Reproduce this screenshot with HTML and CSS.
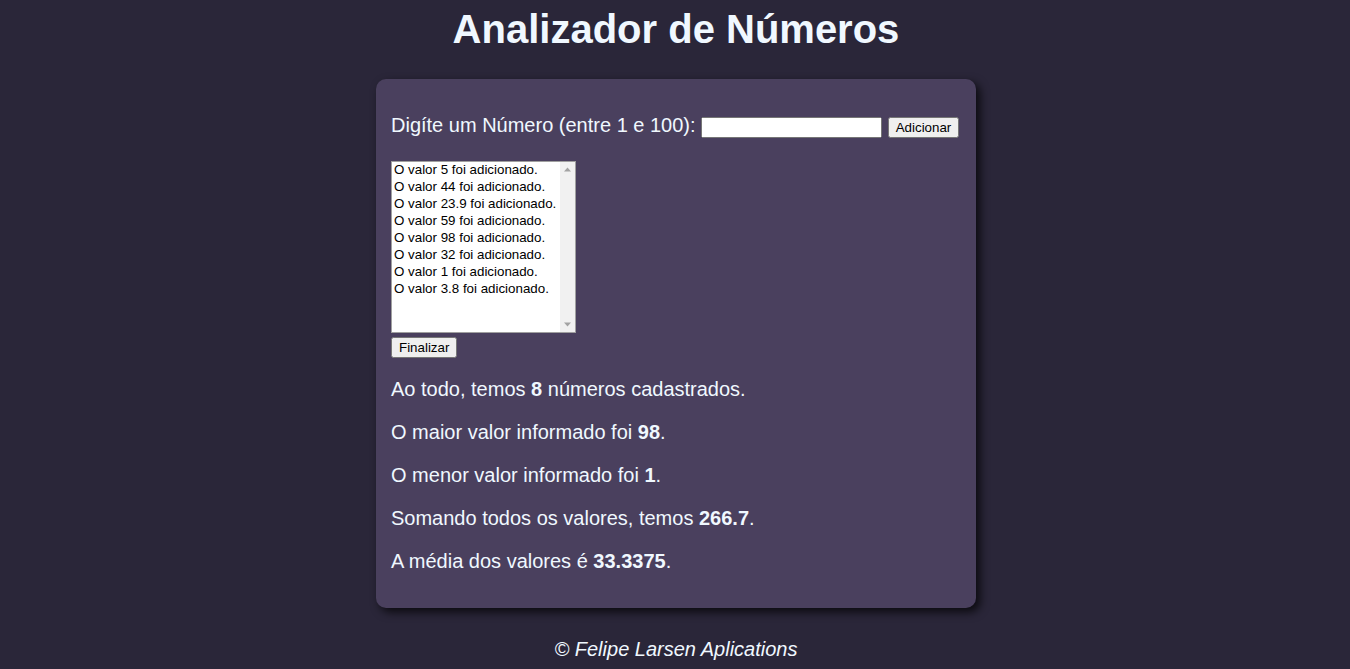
FILE: index.html
```html
<!DOCTYPE html>
<html lang="pt-BR">
<head>
<meta charset="utf-8">
<title>Analizador de Números</title>
<link rel="stylesheet" href="styles.css">
</head>
<body>
<header class="top">
  <h1 class="title">Analizador de Números</h1>
</header>
<section class="panel">
  <p class="entry">
    <label for="num">Digíte um Número (entre 1 e 100):</label>
    <input type="number" id="num" class="field">
    <input type="button" value="Adicionar" class="btn">
  </p>
  <div class="listbox">
    <div class="list" role="listbox">
      <ul class="items">
        <li>O valor 5 foi adicionado.</li>
        <li>O valor 44 foi adicionado.</li>
        <li>O valor 23.9 foi adicionado.</li>
        <li>O valor 59 foi adicionado.</li>
        <li>O valor 98 foi adicionado.</li>
        <li>O valor 32 foi adicionado.</li>
        <li>O valor 1 foi adicionado.</li>
        <li>O valor 3.8 foi adicionado.</li>
      </ul>
      <div class="track">
        <svg class="arrow" width="15" height="15" viewBox="0 0 15 15"><path d="M4 9.5 L7.5 5.5 L11 9.5 Z" fill="#a3a3a3"/></svg>
        <svg class="arrow" width="15" height="15" viewBox="0 0 15 15"><path d="M4 5.5 L7.5 9.5 L11 5.5 Z" fill="#a3a3a3"/></svg>
      </div>
    </div>
    <input type="button" value="Finalizar" class="btn finish">
  </div>
  <div class="result">
    <p>Ao todo, temos <strong>8</strong> números cadastrados.</p>
    <p>O maior valor informado foi <strong>98</strong>.</p>
    <p>O menor valor informado foi <strong>1</strong>.</p>
    <p>Somando todos os valores, temos <strong>266.7</strong>.</p>
    <p>A média dos valores é <strong>33.3375</strong>.</p>
  </div>
</section>
<footer class="foot">
  <p>&copy; Felipe Larsen Aplications</p>
</footer>
</body>
</html>
```
FILE: styles.css
```css
html, body {
  margin: 0;
  padding: 0;
}
body {
  padding-left: 2px;
  background: #2a2639;
  font-family: "Liberation Sans", Arial, sans-serif;
  color: #f0f8ff;
  font-size: 20px;
}
.top {
  text-align: center;
}
.title {
  margin: 0;
  padding-top: 6px;
  font-size: 40px;
  line-height: 46px;
  color: #f0f8ff;
}
.panel {
  width: 570px;
  margin: 27px auto 0;
  padding: 15px;
  background: #4a405e;
  border-radius: 10px;
  box-shadow: 4px 4px 10px rgba(0, 0, 0, 0.75);
}
.entry {
  margin: 20px 0;
  line-height: 23px;
}
.field {
  box-sizing: border-box;
  width: 181px;
  height: 21px;
  vertical-align: 0;
  font-family: "Liberation Sans", Arial, sans-serif;
  -moz-appearance: textfield;
}
.field::-webkit-outer-spin-button,
.field::-webkit-inner-spin-button {
  -webkit-appearance: none;
  margin: 0;
}
.btn {
  font-family: "Liberation Sans", Arial, sans-serif;
  font-size: 13.33px;
  height: 21px;
  padding: 1px 6px;
}
.entry .btn {
  vertical-align: 0;
}
.listbox {
  display: flex;
  flex-direction: column;
  align-items: flex-start;
  gap: 4px;
  padding-top: 3px;
}
.list {
  box-sizing: border-box;
  display: flex;
  width: 185px;
  height: 172px;
  background: #fff;
  border: 1px solid #a0a0a0;
  color: #000;
  font-family: "Liberation Sans", Arial, sans-serif;
  font-size: 13.33px;
}
.items {
  flex: 1;
  margin: 0;
  padding: 0;
  list-style: none;
}
.items li {
  height: 17px;
  line-height: 16px;
  padding: 0 2px;
  white-space: nowrap;
}
.track {
  width: 15px;
  background: #f1f1f1;
  display: flex;
  flex-direction: column;
  justify-content: space-between;
}
.arrow {
  display: block;
}
.result p {
  margin: 20px 0;
  line-height: 23px;
}
.result strong {
  font-weight: bold;
}
.foot {
  text-align: center;
  font-style: italic;
}
.foot p {
  margin: 30px 0 0;
  line-height: 23px;
}
```
